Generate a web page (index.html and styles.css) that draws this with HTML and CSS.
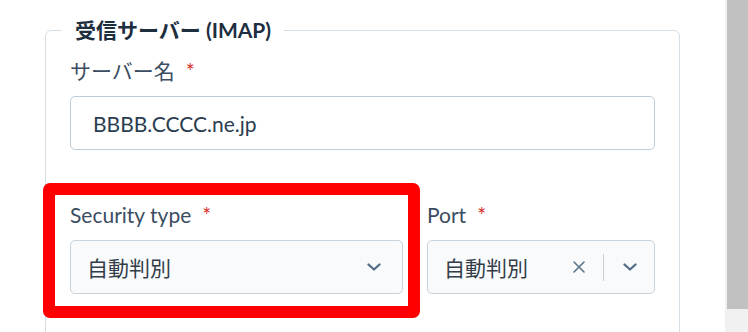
FILE: index.html
```html
<!DOCTYPE html>
<html lang="ja">
<head>
    <meta charset="UTF-8">
    <meta name="viewport" content="width=device-width, initial-scale=1.0">
    <title>受信サーバー設定</title>
    <link rel="stylesheet" href="styles.css">
</head>
<body>
    <div class="page">
        <fieldset class="server-box">
            <legend>受信サーバー (IMAP)</legend>
            <div class="field">
                <label class="label">サーバー名<span class="req">*</span></label>
                <div class="input">BBBB.CCCC.ne.jp</div>
            </div>
            <div class="row">
                <div class="field highlight">
                    <label class="label">Security type<span class="req">*</span></label>
                    <div class="select select-security">
                        <span class="value">自動判別</span>
                        <svg class="chevron" width="14" height="8" viewBox="0 0 14 8">
                            <path d="M1.5 1.5 L7 6.5 L12.5 1.5" fill="none" stroke="#4f6a84" stroke-width="2.2" stroke-linecap="round" stroke-linejoin="round"/>
                        </svg>
                    </div>
                </div>
                <div class="field">
                    <label class="label">Port<span class="req">*</span></label>
                    <div class="select select-port">
                        <span class="value">自動判別</span>
                        <svg class="clear" width="12" height="12" viewBox="0 0 12 12">
                            <path d="M1 1 L11 11 M11 1 L1 11" fill="none" stroke="#5b7489" stroke-width="1.6" stroke-linecap="round"/>
                        </svg>
                        <span class="separator"></span>
                        <svg class="chevron" width="14" height="8" viewBox="0 0 14 8">
                            <path d="M1.5 1.5 L7 6.5 L12.5 1.5" fill="none" stroke="#4f6a84" stroke-width="2.2" stroke-linecap="round" stroke-linejoin="round"/>
                        </svg>
                    </div>
                </div>
            </div>
        </fieldset>
    </div>
    <div class="scrollbar">
        <div class="thumb"></div>
    </div>
</body>
</html>
```

FILE: styles.css
```css
html, body {
    height: 100%;
}
body {
    margin: 0;
    display: flex;
    overflow: hidden;
    background: #ffffff;
    font-family: Lato, "Noto Sans CJK JP", sans-serif;
    color: #2c3e50;
}
.page {
    flex: 1;
    padding: 18px 0 0 45px;
}
.server-box {
    box-sizing: border-box;
    width: 635px;
    margin: 0;
    min-width: 0;
    padding: 15px 24px 40px;
    border: 1px solid #d6dee6;
    border-radius: 6px;
}
legend {
    margin-left: -8px;
    padding: 0 13px;
    font-size: 21px;
    font-weight: 700;
    line-height: 24px;
    color: #1d2e3f;
}
.field {
    display: flex;
    flex-direction: column;
    margin-bottom: 51px;
}
.label {
    font-size: 21px;
    line-height: 28px;
    color: #3b4d61;
    margin-bottom: 11px;
}
.req {
    color: #d9302a;
    font-size: 21px;
    margin-left: 11px;
}
.input {
    box-sizing: border-box;
    height: 54px;
    display: flex;
    align-items: center;
    padding-left: 22px;
    border: 1px solid #bfcdd8;
    border-radius: 5px;
    font-size: 21px;
    color: #2b3d50;
}
.row {
    display: grid;
    grid-template-columns: 333fr 228fr;
    column-gap: 24px;
}
.select {
    box-sizing: border-box;
    height: 54px;
    display: flex;
    align-items: center;
    padding-left: 16px;
    background: #f8fafc;
    border: 1px solid #c6d2dc;
    border-radius: 5px;
    font-size: 21px;
    color: #333d48;
}
.value {
    flex: 1;
}
.select-security {
    padding-right: 21px;
}
.select-port {
    padding-right: 17px;
}
.separator {
    width: 1px;
    height: 27px;
    margin: 0 19px 0 18px;
    background: #c9cfd4;
}
.highlight {
    position: relative;
}
.highlight::after {
    content: '';
    position: absolute;
    top: -18px;
    left: -27px;
    right: -17px;
    bottom: -24px;
    border: 12px solid #ff0000;
    border-radius: 7px;
    pointer-events: none;
}
.scrollbar {
    width: 23px;
    background: #f1f1f1;
}
.thumb {
    margin-left: 2px;
    height: 309px;
    background: #c1c1c1;
}
```
